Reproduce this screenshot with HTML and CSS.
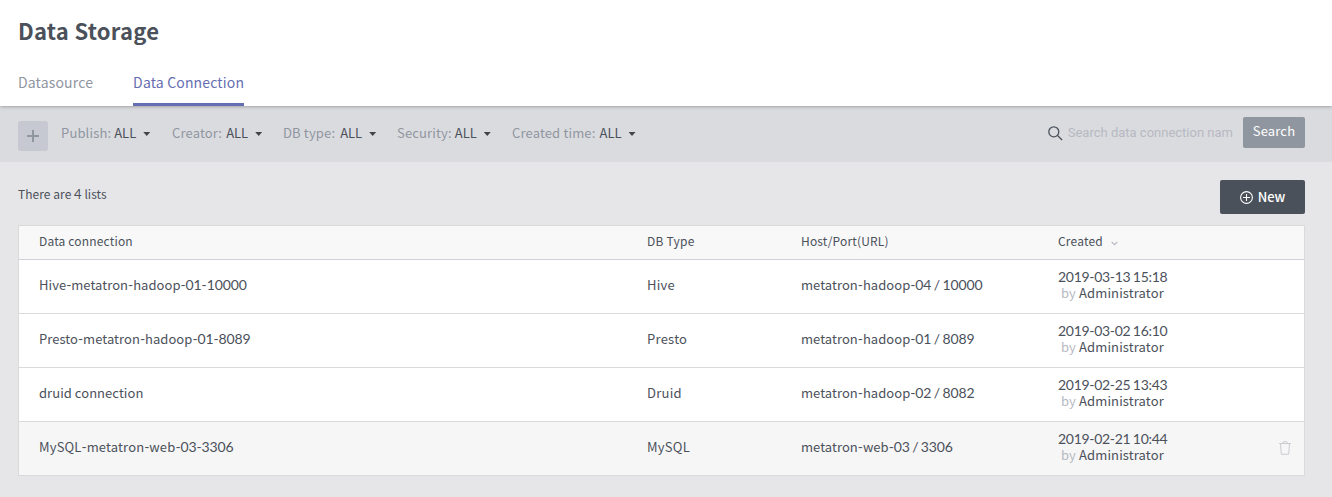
FILE: index.html
```html
<!DOCTYPE html>
<html lang="en">
<head>
<meta charset="utf-8">
<title>Data Storage</title>
<link rel="stylesheet" href="styles.css">
</head>
<body>
<header class="header">
  <h1 class="title">Data Storage</h1>
  <nav class="tabs">
    <a class="tab">Datasource</a>
    <a class="tab active">Data Connection</a>
  </nav>
</header>
<section class="filters">
  <button class="add" aria-label="Add filter"><svg width="12" height="12" viewBox="0 0 12 12"><path d="M6 0v12M0 6h12" stroke="#9097a0" stroke-width="2"/></svg></button>
  <div class="filter f1"><span class="label">Publish:</span><span class="value">ALL</span><i class="caret"></i></div>
  <div class="filter f2"><span class="label">Creator:</span><span class="value">ALL</span><i class="caret"></i></div>
  <div class="filter f3"><span class="label">DB type:</span><span class="value">ALL</span><i class="caret"></i></div>
  <div class="filter f4"><span class="label">Security:</span><span class="value">ALL</span><i class="caret"></i></div>
  <div class="filter f5"><span class="label">Created time:</span><span class="value">ALL</span><i class="caret"></i></div>
  <div class="search">
    <svg class="lens" width="15" height="15" viewBox="0 0 15 15" fill="none" stroke="#4b515b" stroke-width="1.3"><circle cx="5.8" cy="5.8" r="5"/><path d="M9.3 9.3l4.8 4.7"/></svg>
    <span class="hint">Search data connection nam</span>
    <button class="search-btn">Search</button>
  </div>
</section>
<main class="content">
  <div class="bar">
    <span class="count">There are <span class="num">4</span> lists</span>
    <button class="new"><svg width="13" height="13" viewBox="0 0 13 13" fill="none" stroke="#fff" stroke-width="1.1"><circle cx="6.5" cy="6.5" r="5.9"/><path d="M6.5 3v7M3 6.5h7"/></svg><span>New</span></button>
  </div>
  <div class="table">
    <div class="row head"><span>Data connection</span><span class="type">DB Type</span><span>Host/Port(URL)</span><span class="sort">Created<svg width="7" height="5" viewBox="0 0 7 5" fill="none" stroke="#b7b9c2" stroke-width="1.2"><path d="M.6.8l2.9 2.9L6.4.8"/></svg></span></div>
    <div class="row"><span>Hive<span class="num">-</span>metatron<span class="num">-</span>hadoop<span class="num">-01-10000</span></span><span class="type">Hive</span><span>metatron<span class="num">-</span>hadoop<span class="num">-04 / 10000</span></span><div class="created"><span class="num">2019-03-13 15:18</span><span class="who"><em>by</em> Administrator</span></div></div>
    <div class="row"><span>Presto<span class="num">-</span>metatron<span class="num">-</span>hadoop<span class="num">-01-8089</span></span><span class="type">Presto</span><span>metatron<span class="num">-</span>hadoop<span class="num">-01 / 8089</span></span><div class="created"><span class="num">2019-03-02 16:10</span><span class="who"><em>by</em> Administrator</span></div></div>
    <div class="row"><span>druid connection</span><span class="type">Druid</span><span>metatron<span class="num">-</span>hadoop<span class="num">-02 / 8082</span></span><div class="created"><span class="num">2019-02-25 13:43</span><span class="who"><em>by</em> Administrator</span></div></div>
    <div class="row hover"><span class="wide">MySQL<span class="num">-</span>metatron<span class="num">-</span>web<span class="num">-03-3306</span></span><span class="type">MySQL</span><span>metatron<span class="num">-</span>web<span class="num">-03 / 3306</span></span><div class="created"><span class="num">2019-02-21 10:44</span><span class="who"><em>by</em> Administrator</span></div><svg class="trash" width="12" height="14" viewBox="0 0 12 14" fill="none" stroke="#cbccd2"><path d="M0 2.5h12M3.5 2.5l.8-1.8h3.4l.8 1.8M1.5 2.5l.8 10.8h7.4l.8-10.8"/></svg></div>
  </div>
</main>
</body>
</html>
```
FILE: styles.css
```css
* { box-sizing: border-box; }
body {
  margin: 0;
  height: 497px;
  overflow: hidden;
  background: #e6e6e8;
  color: #4b515b;
  font: 13px/20px "Noto Sans CJK KR", sans-serif;
}
button { border: 0; padding: 0; font: inherit; }
.header {
  position: relative;
  height: 106px;
  padding: 15px 18px 0;
  background: #fff;
  box-shadow: 0 0 4px rgba(0, 0, 0, .4);
}
.title { margin: 0; font-size: 22px; line-height: 30px; font-weight: 700; letter-spacing: .27px; }
.tabs { display: flex; gap: 40px; margin-top: 25px; }
.tab { height: 36px; padding-top: 2px; font-size: 14px; line-height: 20px; letter-spacing: .16px; color: #90969f; }
.active { color: #666eb2; border-bottom: 3px solid #666eb2; }
.filters {
  display: flex;
  align-items: flex-start;
  height: 56px;
  padding: 0 27px 0 18px;
  background: #dadbdf;
}
.add {
  display: flex;
  align-items: center;
  justify-content: center;
  width: 30px;
  height: 30px;
  margin: 15px 13px 0 0;
  border-radius: 3px;
  background: #c6c9d1;
}
.filter { display: flex; width: 111px; padding-top: 17px; }
.label { color: #90969f; letter-spacing: .15px; }
.value { margin-left: 3px; }
.caret {
  margin: 9px 0 0 7px;
  width: 7px;
  height: 4px;
  background: #444;
  clip-path: polygon(0 0, 100% 0, 50% 100%);
}
.f4 { width: 115px; }
.f3 { width: 114px; }
.f2 .value, .f5 .value { margin-left: 4px; }
.f3 .value { margin-left: 5px; }
.f5 { width: 130px; }
.search { display: flex; margin-left: auto; padding-top: 11px; }
.lens { margin-top: 9px; }
.hint { margin: 6px 10px 0 5px; color: #b7b9c2; font-family: Roboto, sans-serif; white-space: nowrap; }
.search-btn { width: 62px; height: 31px; padding-bottom: 3px; border-radius: 2px; color: #fff; background: #90969f; line-height: 28px; letter-spacing: .15px; }
.content { padding: 18px 27px 0 18px; }
.bar { display: flex; justify-content: space-between; height: 45px; }
.count { padding-top: 4px; font-size: 12px; letter-spacing: .05px; }
.new {
  display: flex;
  align-items: center;
  justify-content: center;
  gap: 5px;
  width: 85px;
  height: 34px;
  border-radius: 2px;
  color: #fff;
  background: #4b515b;
  font-weight: 500;
}
.new span { padding-bottom: 1px; }
.table { border: 1px solid #dadada; background: #fff; }
.row {
  position: relative;
  display: grid;
  grid-template-columns: 608px 154px 257px 1fr;
  align-items: center;
  height: 54px;
  padding: 0 20px 4px;
  border-bottom: 1px solid #dadada;
  letter-spacing: .05px;
}
.row:last-child { height: 53px; padding-bottom: 3px; border-bottom: 0; }
.row .type { letter-spacing: .25px; }
.wide { letter-spacing: .15px; }
.head { height: 34px; background: #f8f8f8; border-color: #d0d1d8; font-size: 12px; letter-spacing: .17px; }
.hover { background: #f6f6f6; }
.num { font-family: Lato, sans-serif; font-size: 14px; letter-spacing: -.13px; word-spacing: -1px; }
.count .num { font-size: 13px; letter-spacing: 0; word-spacing: 0; }
.created { display: flex; flex-direction: column; line-height: 16px; }
.created .num { letter-spacing: -.3px; word-spacing: -.8px; }
.who { padding-left: 3px; letter-spacing: .12px; }
.who em { font-style: normal; color: #b7b9c2; }
.sort { display: flex; align-items: center; gap: 8px; }
.sort svg { margin-top: 5px; }
.trash { position: absolute; right: 13px; top: 19px; }
```
